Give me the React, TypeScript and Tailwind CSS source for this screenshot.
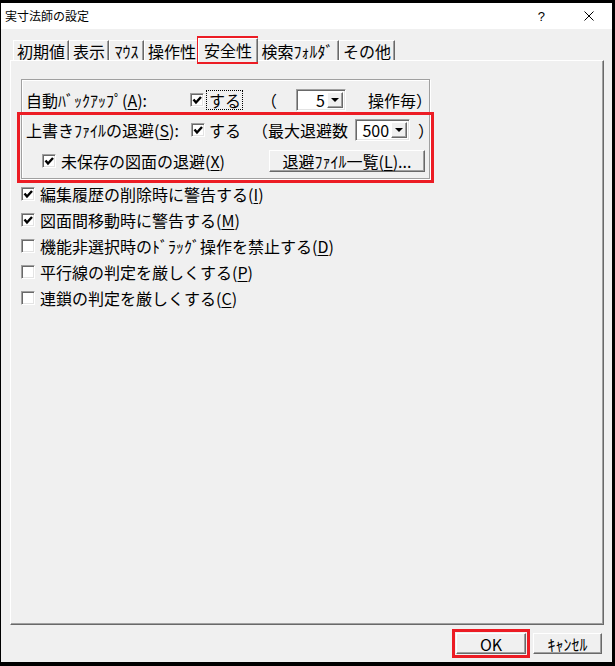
import React from "react";

const SUNKEN =
  "border border-t-[#a0a0a0] border-l-[#a0a0a0] border-b-white border-r-white shadow-[inset_1px_1px_0_#696969,inset_-1px_-1px_0_#e3e3e3]";
const RAISED =
  "border border-t-white border-l-white border-b-[#696969] border-r-[#696969] shadow-[inset_-1px_-1px_0_#a0a0a0]";

function CheckBox({ checked }: { checked?: boolean }) {
  return (
    <span className={`relative block h-[14px] w-[14px] shrink-0 bg-white ${SUNKEN}`}>
      {checked && (
        <svg className="absolute left-0 top-0" width="12" height="12" viewBox="0 0 12 12">
          <path d="M2.5 5.5 L5 8.5 L10 3" stroke="black" strokeWidth="2.4" fill="none" />
        </svg>
      )}
    </span>
  );
}

function Key({ k }: { k: string }) {
  return (
    <>
      (<span className="underline underline-offset-2">{k}</span>)
    </>
  );
}

function Combo({ value, className }: { value: string; className: string }) {
  return (
    <div className={`flex h-[22px] shrink-0 bg-white p-[2px] ${SUNKEN} ${className}`}>
      <span className="flex-1 pr-[2px] text-right leading-[16px]">{value}</span>
      <span className={`flex w-[16px] items-center justify-center bg-[#f0f0f0] ${RAISED}`}>
        <svg width="8" height="4" viewBox="0 0 8 4">
          <polygon points="0,0 8,0 4,4" fill="black" />
        </svg>
      </span>
    </div>
  );
}

function Tab({ label, className, active }: { label: string; className: string; active?: boolean }) {
  return (
    <div
      className={`flex shrink-0 items-center justify-center border-l border-t border-white border-r border-r-[#696969] shadow-[inset_-1px_0_0_#a0a0a0] ${
        active ? "z-10 mx-[-2px] mb-[-2px] h-[24px] bg-[#f0f0f0] pb-[2px]" : "h-[20px]"
      } ${className}`}
    >
      <span className="leading-none">{label}</span>
    </div>
  );
}

const options = [
  { label: "編集履歴の削除時に警告する", k: "I", checked: true },
  { label: "図面間移動時に警告する", k: "M", checked: true },
  { label: "機能非選択時のﾄﾞﾗｯｸﾞ操作を禁止する", k: "D", checked: false },
  { label: "平行線の判定を厳しくする", k: "P", checked: false },
  { label: "連鎖の判定を厳しくする", k: "C", checked: false },
];

export default function App() {
  return (
    <div className="relative h-[666px] w-[615px] whitespace-nowrap bg-black pb-[4px] pl-[1px] pr-[3px] pt-[3px] font-['Noto_Sans_CJK_JP','Noto_Sans',sans-serif] text-[16px] text-black">
      <div className="flex h-full flex-col bg-[#f0f0f0]">
        {/* title bar */}
        <div className="flex h-[26px] shrink-0 items-center bg-white pl-[4px] pr-[18px]">
          <span className="text-[12px] leading-none">実寸法師の設定</span>
          <span className="ml-auto font-['Liberation_Sans',sans-serif] text-[13px] leading-none">?</span>
          <svg className="ml-[39px]" width="10" height="10" viewBox="0 0 10 10">
            <path d="M0.5 0.5 L9.5 9.5 M9.5 0.5 L0.5 9.5" stroke="black" strokeWidth="1" />
          </svg>
        </div>

        <div className="pl-[9px] pr-[8px]">
          {/* tabs */}
          <div className="mt-[7px] flex h-[24px] items-end pl-[3px]">
            <Tab label="初期値" className="w-[56px]" />
            <Tab label="表示" className="w-[40px]" />
            <Tab label="ﾏｳｽ" className="w-[35px]" />
            <Tab label="操作性" className="w-[56px]" />
            <Tab label="安全性" className="w-[60px]" active />
            <Tab label="検索ﾌｫﾙﾀﾞ" className="w-[83px]" />
            <Tab label="その他" className="w-[56px]" />
          </div>

          {/* panel */}
          <div className="h-[565px] border border-l-white border-t-white border-b-[#696969] border-r-[#696969] shadow-[inset_-1px_-1px_0_#a0a0a0]">
            <div className="ml-[10px] mt-[18px] w-[409px] border border-[#a0a0a0] pb-[6px] pl-[4px] pr-[4px] pt-[9px] shadow-[inset_1px_1px_0_#fff,1px_1px_0_#fff]">
              <div className="flex h-[22px] items-center">
                <span className="w-[164px] shrink-0">
                  自動ﾊﾞｯｸｱｯﾌﾟ<Key k="A" />:
                </span>
                <CheckBox checked />
                <span className="ml-[2px] flex h-[20px] w-[37px] shrink-0 items-center border border-dotted border-black pl-[2px] leading-none">
                  する
                </span>
                <span className="ml-[18px] w-[16px] shrink-0">（</span>
                <Combo value="5" className="ml-[19px] w-[50px]" />
                <span className="ml-[22px] shrink-0">操作毎）</span>
              </div>
              <div className="mt-[8px] flex h-[22px] items-center">
                <span className="w-[165px] shrink-0">
                  上書きﾌｧｲﾙの退避<Key k="S" />:
                </span>
                <CheckBox checked />
                <span className="ml-[4px] shrink-0">する</span>
                <span className="ml-[11px] shrink-0">（最大退避数</span>
                <Combo value="500" className="ml-[7px] w-[55px]" />
                <span className="ml-[8px] shrink-0">）</span>
              </div>
              <div className="mt-[9px] flex h-[22px] items-center">
                <span className="ml-[16px] shrink-0">
                  <CheckBox checked />
                </span>
                <span className="ml-[5px] shrink-0">
                  未保存の図面の退避<Key k="X" />
                </span>
                <button className={`ml-auto flex h-[22px] w-[156px] shrink-0 items-center justify-center bg-[#f0f0f0] leading-none ${RAISED}`}>
                  退避ﾌｧｲﾙ一覧<Key k="L" />...
                </button>
              </div>
            </div>

            <div className="ml-[10px] mt-[2px] flex flex-col">
              {options.map((o) => (
                <div key={o.k} className="flex h-[26px] items-center gap-[5px]">
                  <CheckBox checked={o.checked} />
                  <span>
                    {o.label}
                    <Key k={o.k} />
                  </span>
                </div>
              ))}
            </div>
          </div>
        </div>

        {/* buttons */}
        <div className="mt-[8px] flex justify-end gap-[7px] pr-[10px]">
          <button className={`flex h-[21px] w-[70px] items-center justify-center bg-[#f0f0f0] leading-none ${RAISED}`}>
            OK
          </button>
          <button className={`flex h-[21px] w-[69px] items-center justify-center bg-[#f0f0f0] leading-none ${RAISED}`}>
            ｷｬﾝｾﾙ
          </button>
        </div>
      </div>

      {/* red highlight boxes */}
      <div className="absolute left-[197px] top-[36px] h-[28px] w-[61px] border-[3px] border-[#ec1c24]" />
      <div className="absolute left-[17px] top-[112px] h-[71px] w-[417px] border-[3px] border-[#ec1c24]" />
      <div className="absolute left-[452px] top-[629px] h-[29px] w-[78px] border-[3px] border-[#ec1c24]" />
    </div>
  );
}
